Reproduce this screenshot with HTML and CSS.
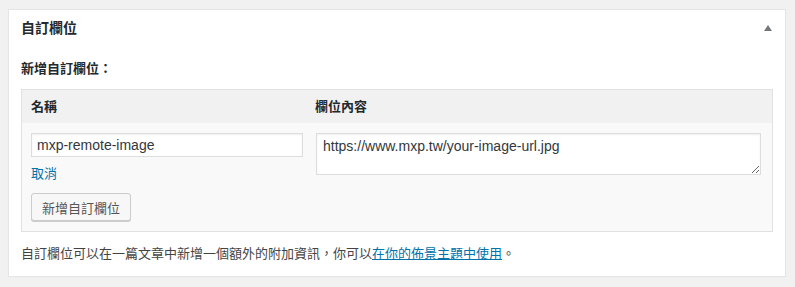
FILE: index.html
```html
<!DOCTYPE html>
<html lang="zh-Hant">
<head>
  <meta charset="UTF-8">
  <meta name="viewport" content="width=device-width, initial-scale=1.0">
  <title>自訂欄位</title>
  <link rel="stylesheet" href="styles.css">
</head>
<body>
  <div class="postbox">
    <div class="hndle">
      <h2>自訂欄位</h2>
      <button class="toggle" type="button" aria-label="切換面板">
        <svg width="8" height="6" viewBox="0 0 8 6"><path d="M4 0 L8 6 L0 6 Z" fill="#72777c"/></svg>
      </button>
    </div>

    <div class="inside">
      <p class="newmeta-title">新增自訂欄位：</p>

      <!-- new meta table -->
      <div class="meta-table">
        <div class="th">名稱</div>
        <div class="th">欄位內容</div>

        <div class="td left">
          <input class="meta-input" type="text" value="mxp-remote-image">
          <a class="cancel" href="#">取消</a>
          <button class="btn" type="button">新增自訂欄位</button>
        </div>
        <div class="td right">
          <textarea class="meta-value" rows="2">https://www.mxp.tw/your-image-url.jpg</textarea>
        </div>
      </div>

      <p class="note">自訂欄位可以在一篇文章中新增一個額外的附加資訊，你可以<a href="#">在你的佈景主題中使用</a>。</p>
    </div>
  </div>
</body>
</html>
```

FILE: styles.css
```css
body {
    margin: 0;
    padding: 9px 9px 0 8px;
    background-color: #f1f1f1;
    font-family: "Liberation Sans", "Noto Sans CJK TC", sans-serif;
    font-size: 13px;
    color: #444;
}

.postbox {
    background: #fff;
    border: 1px solid #e5e5e5;
    box-shadow: 0 1px 1px rgba(0, 0, 0, 0.04);
}

.hndle {
    display: flex;
    justify-content: space-between;
    align-items: center;
    padding: 8px 12px;
}

.hndle h2 {
    margin: 0;
    font-size: 14px;
    line-height: 20px;
    font-weight: 600;
    color: #23282d;
}

.toggle {
    display: flex;
    padding: 0;
    margin-right: 1px;
    border: 0;
    background: none;
    cursor: pointer;
}

.inside {
    padding: 12px 12px 12px 12px;
}

.newmeta-title {
    margin: 0 0 9px;
    line-height: 22px;
    font-weight: 600;
    color: #23282d;
}

/* Relevant table layout */

.meta-table {
    display: grid;
    grid-template-columns: 284px 1fr;
    border: 1px solid #e1e1e1;
    background: #f9f9f9;
}

.th {
    padding: 7px 9px;
    line-height: 19px;
    font-weight: 600;
    color: #23282d;
    background: #f1f1f1;
}

.td {
    display: flex;
    flex-direction: column;
    align-items: flex-start;
    padding: 10px 0;
}

.td.left {
    padding-left: 9px;
}

.td.right {
    padding: 10px 11px 10px 10px;
}

.meta-input {
    box-sizing: border-box;
    width: 272px;
    height: 24px;
    margin: 0;
    padding: 0 5px;
    border: 1px solid #ddd;
    border-radius: 0;
    box-shadow: inset 0 1px 2px rgba(0, 0, 0, 0.07);
    background: #fff;
    font-family: "Liberation Sans", "Noto Sans CJK TC", sans-serif;
    font-size: 14px;
    color: #32373c;
    outline: none;
}

.meta-value {
    box-sizing: border-box;
    width: 100%;
    height: 42px;
    margin: 0;
    padding: 2px 6px;
    border: 1px solid #ddd;
    border-radius: 0;
    box-shadow: inset 0 1px 2px rgba(0, 0, 0, 0.07);
    background: #fff;
    font-family: "Liberation Sans", "Noto Sans CJK TC", sans-serif;
    font-size: 14px;
    line-height: 20px;
    color: #32373c;
    resize: vertical;
    outline: none;
}

.cancel {
    margin-top: 7px;
    line-height: 20px;
    color: #0073aa;
    text-decoration: none;
}

.btn {
    box-sizing: border-box;
    width: 100px;
    height: 28px;
    margin-top: 9px;
    padding: 0 10px;
    border: 1px solid #ccc;
    border-radius: 3px;
    background: #f7f7f7;
    box-shadow: 0 1px 0 #ccc;
    font-family: "Liberation Sans", "Noto Sans CJK TC", sans-serif;
    font-size: 13px;
    color: #555;
    cursor: pointer;
}

.note {
    margin: 12px 0 0;
    line-height: 20px;
    color: #444;
}

.note a {
    color: #0073aa;
    text-decoration: underline;
}
```
